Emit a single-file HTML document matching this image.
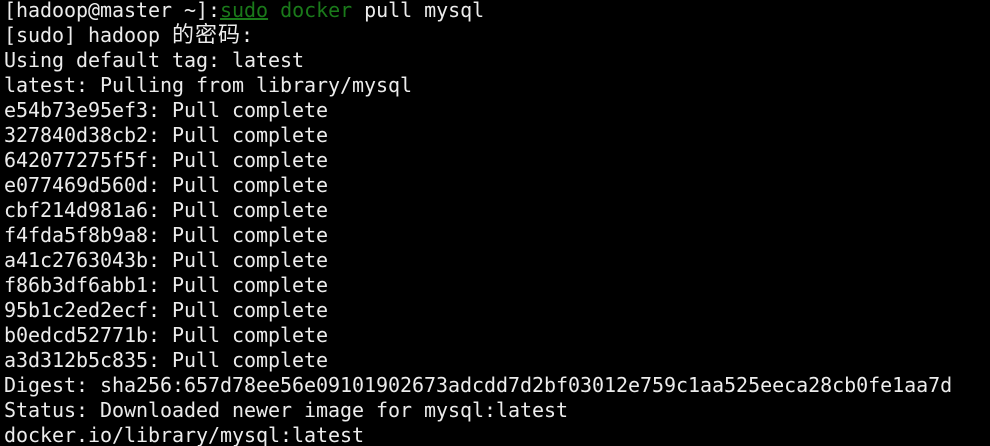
<!DOCTYPE html>
<html><head><meta charset="utf-8"><style>
html,body{margin:0;padding:0;background:#000;width:990px;height:446px;overflow:hidden}
pre{margin:0;padding:0 0 0 4px;position:relative;top:-2px;font-family:"DejaVu Sans Mono","Liberation Mono","Noto Sans CJK SC",monospace;font-size:20px;letter-spacing:-0.04px;line-height:25px;color:#ececec}
.g{color:#1a7a1a}.u{text-decoration:underline}
.c{font-family:"Noto Sans CJK SC",sans-serif;font-size:22px;letter-spacing:1px;line-height:20px}
</style></head><body><pre>[hadoop@master ~]:<span class="g u">sudo</span> <span class="g">docker</span> pull mysql
[sudo] hadoop <span class="c">的密码</span>:
Using default tag: latest
latest: Pulling from library/mysql
e54b73e95ef3: Pull complete
327840d38cb2: Pull complete
642077275f5f: Pull complete
e077469d560d: Pull complete
cbf214d981a6: Pull complete
f4fda5f8b9a8: Pull complete
a41c2763043b: Pull complete
f86b3df6abb1: Pull complete
95b1c2ed2ecf: Pull complete
b0edcd52771b: Pull complete
a3d312b5c835: Pull complete
Digest: sha256:657d78ee56e09101902673adcdd7d2bf03012e759c1aa525eeca28cb0fe1aa7d
Status: Downloaded newer image for mysql:latest
docker.io/library/mysql:latest</pre></body></html>
